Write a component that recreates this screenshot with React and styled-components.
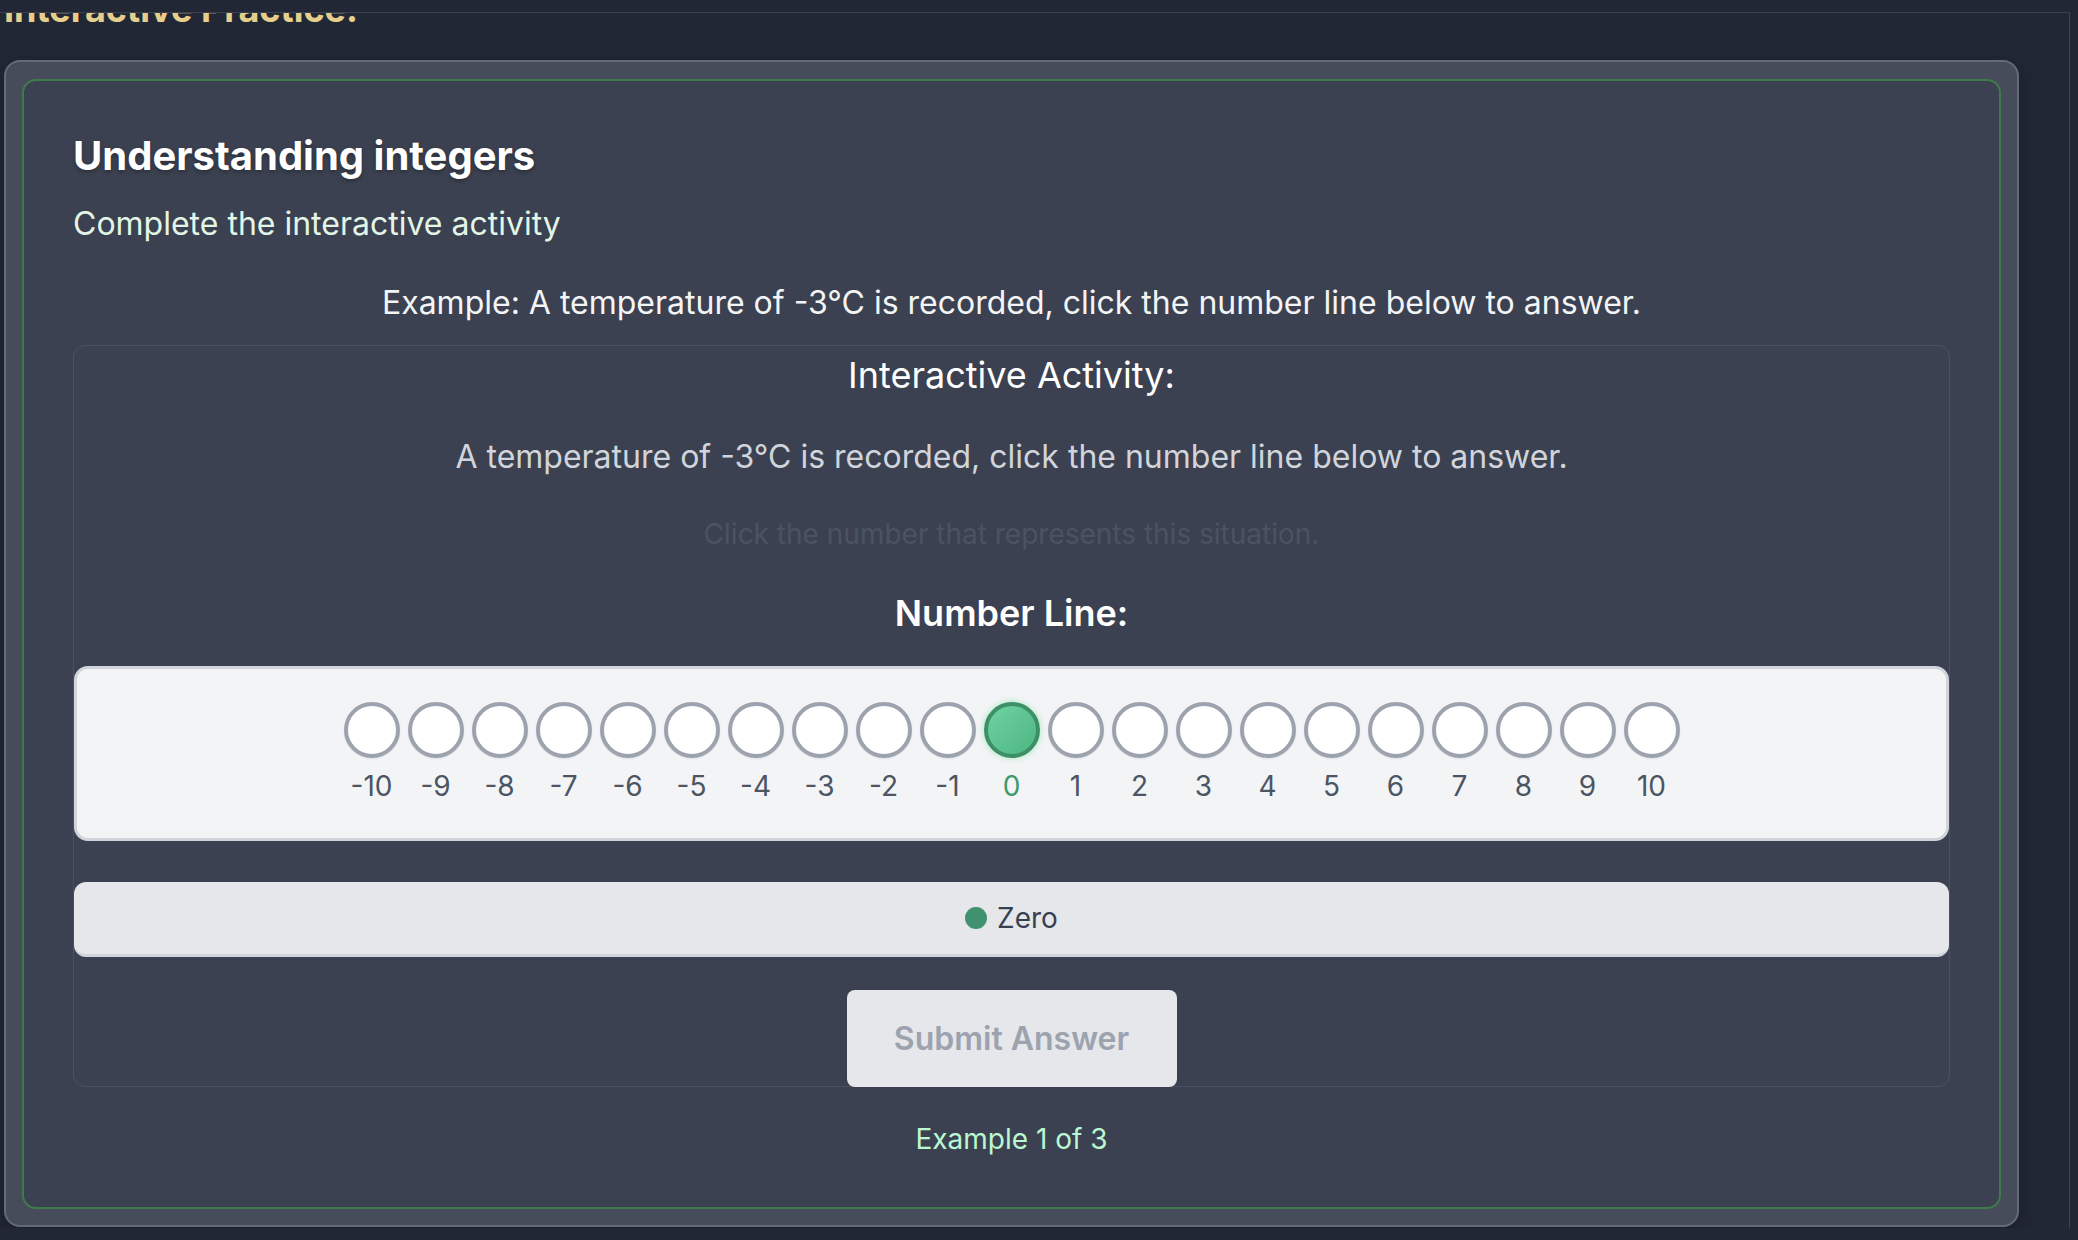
import React from 'react';
import styled, { createGlobalStyle } from 'styled-components';

const GlobalStyle = createGlobalStyle`
  html, body {
    margin: 0;
    padding: 0;
    background: #222736;
    font-family: Inter, "Noto Sans", "Liberation Sans", sans-serif;
  }
`;

const numbers = Array.from({ length: 21 }, (_, i) => i - 10);

const App = () => {
  const selected = 0;

  return (
    <>
      <GlobalStyle />
      <Page>
        <ScrollPanel>
          <SectionTitle>Interactive Practice:</SectionTitle>
          <OuterCard>
            <InnerCard>
              <Heading>Understanding integers</Heading>
              <SubText>Complete the interactive activity</SubText>
              <ExampleText>
                Example: A temperature of -3°C is recorded, click the number line below to answer.
              </ExampleText>

              <ActivityBox>
                <ActivityTitle>Interactive Activity:</ActivityTitle>
                <Question>A temperature of -3°C is recorded, click the number line below to answer.</Question>
                <Hint>Click the number that represents this situation.</Hint>
                <LineTitle>Number Line:</LineTitle>

                <NumberLineBox>
                  <NumberRow>
                    {numbers.map(n => (
                      <NumberItem key={n}>
                        <Dot active={n === selected} />
                        <DotLabel active={n === selected}>{n}</DotLabel>
                      </NumberItem>
                    ))}
                  </NumberRow>
                </NumberLineBox>

                <Legend>
                  <LegendDot />
                  <LegendText>Zero</LegendText>
                </Legend>

                <SubmitButton disabled>Submit Answer</SubmitButton>
              </ActivityBox>

              <Counter>Example 1 of 3</Counter>
            </InnerCard>
          </OuterCard>
        </ScrollPanel>
      </Page>
    </>
  );
};

const Page = styled.div`
  padding-top: 12px;
  height: 1228px;
  box-sizing: border-box;
  overflow: hidden;
`;

// scrolled panel, the title is half hidden under its top edge
const ScrollPanel = styled.div`
  width: 2070px;
  height: 1228px;
  box-sizing: border-box;
  border-top: 1px solid #3a404d;
  border-right: 1px solid #3d4350;
  overflow: hidden;
`;

const SectionTitle = styled.h2`
  margin: -26px 0 29px 4px;
  font-size: 36px;
  line-height: 44px;
  font-weight: 700;
  color: #e5cf8b;
`;

const OuterCard = styled.div`
  margin-left: 4px;
  width: 2015px;
  box-sizing: border-box;
  padding: 17px 16px 16px 16px;
  background: #464c5a;
  border: 2px solid #646a78;
  border-radius: 16px;
  box-shadow: 0 6px 18px rgba(0, 0, 0, 0.25);
`;

const InnerCard = styled.div`
  background: #3b4150;
  border: 2px solid #3e7a4c;
  border-radius: 14px;
  padding: 51px 49px 50px 49px;
`;

const Heading = styled.h3`
  margin: 0;
  font-size: 40px;
  line-height: 48px;
  font-weight: 700;
  color: #ffffff;
  text-shadow: 0 2px 4px rgba(0, 0, 0, 0.3);
`;

const SubText = styled.p`
  margin: 24px 0 0 0;
  font-size: 32px;
  line-height: 40px;
  color: #e3f5e6;
`;

const ExampleText = styled.p`
  margin: 39px 0 0 0;
  text-align: center;
  font-size: 32px;
  line-height: 40px;
  color: #f3f4f6;
`;

const ActivityBox = styled.div`
  margin-top: 22px;
  border: 1.5px solid #4a5161;
  border-radius: 12px;
  padding-top: 7px;
  display: flex;
  flex-direction: column;
  align-items: center;
`;

const ActivityTitle = styled.div`
  font-size: 36px;
  line-height: 44px;
  color: #ffffff;
`;

const Question = styled.div`
  margin-top: 40px;
  font-size: 32px;
  line-height: 40px;
  color: #d1d5db;
`;

const Hint = styled.div`
  margin-top: 39px;
  font-size: 28px;
  line-height: 36px;
  color: #4b5363;
`;

const LineTitle = styled.div`
  margin-top: 39px;
  font-size: 36px;
  line-height: 44px;
  font-weight: 600;
  color: #ffffff;
`;

const NumberLineBox = styled.div`
  align-self: stretch;
  margin-top: 31px;
  height: 175px;
  box-sizing: border-box;
  background: #f3f4f6;
  border: 3px solid #d1d5db;
  border-radius: 14px;
  display: flex;
  justify-content: center;
  padding-top: 33px;
`;

const NumberRow = styled.div`
  display: flex;
  gap: 8px;
`;

const NumberItem = styled.div`
  width: 56px;
  display: flex;
  flex-direction: column;
  align-items: center;
`;

const Dot = styled.div`
  width: 56px;
  height: 56px;
  box-sizing: border-box;
  border-radius: 50%;
  border: 4px solid ${props => (props.active ? '#3d8f66' : '#9ca3af')};
  background: ${props =>
    props.active ? 'linear-gradient(135deg, #6fd3a0, #4cb583)' : '#ffffff'};
  box-shadow: ${props =>
    props.active ? '0 0 6px rgba(74, 222, 128, 0.5)' : '0 1px 2px rgba(0,0,0,0.08)'};
`;

const DotLabel = styled.div`
  margin-top: 12px;
  font-size: 28px;
  line-height: 32px;
  color: ${props => (props.active ? '#3f9a6b' : '#4b5563')};
`;

const Legend = styled.div`
  align-self: stretch;
  margin-top: 41px;
  height: 75px;
  box-sizing: border-box;
  background: #e5e7eb;
  border-bottom: 3px solid #d1d5db;
  border-radius: 12px;
  display: flex;
  align-items: center;
  justify-content: center;
  gap: 10px;
`;

const LegendDot = styled.span`
  width: 22px;
  height: 22px;
  border-radius: 50%;
  background: #3f9170;
`;

const LegendText = styled.span`
  font-size: 28px;
  line-height: 36px;
  color: #374151;
`;

const SubmitButton = styled.button`
  margin-top: 33px;
  margin-bottom: -1px;
  width: 330px;
  height: 97px;
  border: none;
  border-radius: 8px;
  background: #e5e7eb;
  color: #9ca3af;
  font-family: Inter, "Noto Sans", sans-serif;
  font-size: 32px;
  font-weight: 600;
  cursor: not-allowed;
`;

const Counter = styled.div`
  margin-top: 34px;
  text-align: center;
  font-size: 28px;
  line-height: 36px;
  color: #bbf7d0;
`;

export default App;
